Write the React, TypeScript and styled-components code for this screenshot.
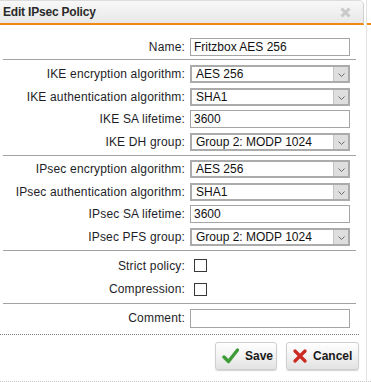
import React from "react";
import styled, { createGlobalStyle } from "styled-components";

const Global = createGlobalStyle`
  html, body { margin: 0; padding: 0; background: #fff; }
  body { font-family: "Liberation Sans", Arial, sans-serif; font-size: 12px; color: #222; }
`;

const Page = styled.div`
  display: flex;
  width: 371px;
  height: 382px;
  box-sizing: border-box;
  border-bottom: 1px dotted #c8c8c8;
  overflow: hidden;
`;

const Dialog = styled.div`
  width: 365px;
  display: flex;
  flex-direction: column;
`;

const Strip = styled.div`
  margin-left: 2px;
  width: 4px;
  border-left: 1px solid #e2e2e2;
  display: flex;
  flex-direction: column;
`;

const StripAccent = styled.div`
  margin-top: 23px;
  height: 2px;
  background: #f08a12;
`;

const TitleBar = styled.div`
  height: 22px;
  border-top: 1px solid #dcdcdc;
  border-right: 1px solid #d0d0d0;
  border-top-right-radius: 5px;
  border-bottom: 2px solid #f08a12;
  background: linear-gradient(#f8f8f8, #e8e8e8);
  display: flex;
  align-items: center;
  justify-content: space-between;
  padding: 0 12px 0 3px;
`;

const Title = styled.span`
  font-weight: bold;
  font-size: 12px;
  color: #2a2a2a;
  letter-spacing: -0.2px;
`;

const CloseIcon = styled.svg`
  width: 11px;
  height: 11px;
  margin-top: 1px;
`;

const Body = styled.div`
  padding-left: 3px;
  width: 353px;
`;

const Section = styled.div<{ $top: number; $bottom: number; $gap?: number; $line?: boolean }>`
  display: grid;
  grid-template-columns: 182px 160px;
  column-gap: 5px;
  row-gap: ${(p) => p.$gap ?? 4.67}px;
  padding-top: ${(p) => p.$top}px;
  padding-bottom: ${(p) => p.$bottom}px;
  border-bottom: ${(p) => (p.$line ? "1px solid #a2a2a2" : "none")};
`;

const Label = styled.label`
  height: 18px;
  line-height: 18px;
  text-align: right;
  white-space: nowrap;
  letter-spacing: 0.17px;
  color: #1e1e28;
`;

const TextInput = styled.div<{ $h?: number }>`
  height: ${(p) => p.$h ?? 18}px;
  box-sizing: border-box;
  border: 1px solid #a5a5a5;
  background: #fff;
  padding-left: 3px;
  line-height: ${(p) => (p.$h ?? 18) - 2}px;
  color: #111;
`;

const SelectBox = styled.div`
  height: 18px;
  box-sizing: border-box;
  border: 2px solid #ababab;
  background: #fff;
  display: flex;
`;

const SelectValue = styled.span`
  flex: 1;
  padding-left: 4px;
  line-height: 14px;
  color: #111;
`;

const SelectArrow = styled.span`
  width: 15px;
  background: #dedede;
  border-left: 1px solid #c4c4c4;
  display: flex;
  align-items: center;
  justify-content: center;
  padding-top: 2px;
  box-sizing: border-box;
`;

const CheckCell = styled.div`
  height: 18px;
  display: flex;
  align-items: center;
`;

const CheckBox = styled.span`
  width: 13px;
  height: 13px;
  box-sizing: border-box;
  border: 1px solid #383838;
  margin-left: 4px;
  background: #fff;
`;

const ButtonBar = styled.div`
  width: 359px;
  border-top: 1px dotted #7a7a7a;
  padding: 7px 0 9px;
  display: flex;
  justify-content: flex-end;
  gap: 9px;
`;

const Button = styled.button<{ $w: number }>`
  width: ${(p) => p.$w}px;
  height: 28px;
  box-sizing: border-box;
  border: 1px solid #cfcfcf;
  border-radius: 3px;
  background: linear-gradient(#ffffff, #f2f2f2 50%, #e2e2e2);
  box-shadow: 0 1px 1px rgba(0, 0, 0, 0.18);
  display: flex;
  align-items: center;
  gap: 6px;
  padding: 0 0 0 6px;
  font-family: "Liberation Sans", Arial, sans-serif;
  font-weight: bold;
  font-size: 12px;
  color: #1a1a1a;
  cursor: pointer;
`;

const Chevron = () => (
  <svg width="7" height="4" viewBox="0 0 7 4">
    <polyline points="0.5,0.5 3.5,3.5 6.5,0.5" fill="none" stroke="#6a6a6a" strokeWidth="1" />
  </svg>
);

const Select = ({ value }: { value: string }) => (
  <SelectBox>
    <SelectValue>{value}</SelectValue>
    <SelectArrow>
      <Chevron />
    </SelectArrow>
  </SelectBox>
);

export default function App() {
  return (
    <>
      <Global />
      <Page>
        <Dialog>
          <TitleBar>
            <Title>Edit IPsec Policy</Title>
            <CloseIcon viewBox="0 0 11 11">
              <line x1="1.5" y1="1.5" x2="9.5" y2="9.5" stroke="#c9c9c9" strokeWidth="3" />
              <line x1="9.5" y1="1.5" x2="1.5" y2="9.5" stroke="#c9c9c9" strokeWidth="3" />
            </CloseIcon>
          </TitleBar>
          <Body>
            <Section $top={13} $bottom={3} $line>
              <Label>Name:</Label>
              <TextInput>Fritzbox AES 256</TextInput>
            </Section>
            <Section $top={5} $bottom={4} $line>
              <Label>IKE encryption algorithm:</Label>
              <Select value="AES 256" />
              <Label>IKE authentication algorithm:</Label>
              <Select value="SHA1" />
              <Label>IKE SA lifetime:</Label>
              <TextInput>3600</TextInput>
              <Label>IKE DH group:</Label>
              <Select value="Group 2: MODP 1024" />
            </Section>
            <Section $top={4} $bottom={4} $line>
              <Label>IPsec encryption algorithm:</Label>
              <Select value="AES 256" />
              <Label>IPsec authentication algorithm:</Label>
              <Select value="SHA1" />
              <Label>IPsec SA lifetime:</Label>
              <TextInput>3600</TextInput>
              <Label>IPsec PFS group:</Label>
              <Select value="Group 2: MODP 1024" />
            </Section>
            <Section $top={6} $bottom={5} $gap={5.5} $line>
              <Label>Strict policy:</Label>
              <CheckCell>
                <CheckBox />
              </CheckCell>
              <Label>Compression:</Label>
              <CheckCell>
                <CheckBox />
              </CheckCell>
            </Section>
            <Section $top={5} $bottom={6}>
              <Label>Comment:</Label>
              <TextInput $h={19} />
            </Section>
          </Body>
          <ButtonBar>
            <Button $w={62}>
              <svg width="17" height="16" viewBox="0 0 17 16">
                <polyline points="2,9 6.5,13.5 15.5,2" fill="none" stroke="#3e9b37" strokeWidth="3.4" strokeLinecap="round" strokeLinejoin="round" />
              </svg>
              Save
            </Button>
            <Button $w={73}>
              <svg width="14" height="14" viewBox="0 0 14 14">
                <line x1="2" y1="2" x2="12" y2="12" stroke="#cc2a24" strokeWidth="3.2" strokeLinecap="round" />
                <line x1="12" y1="2" x2="2" y2="12" stroke="#cc2a24" strokeWidth="3.2" strokeLinecap="round" />
              </svg>
              Cancel
            </Button>
          </ButtonBar>
        </Dialog>
        <Strip>
          <StripAccent />
        </Strip>
      </Page>
    </>
  );
}
